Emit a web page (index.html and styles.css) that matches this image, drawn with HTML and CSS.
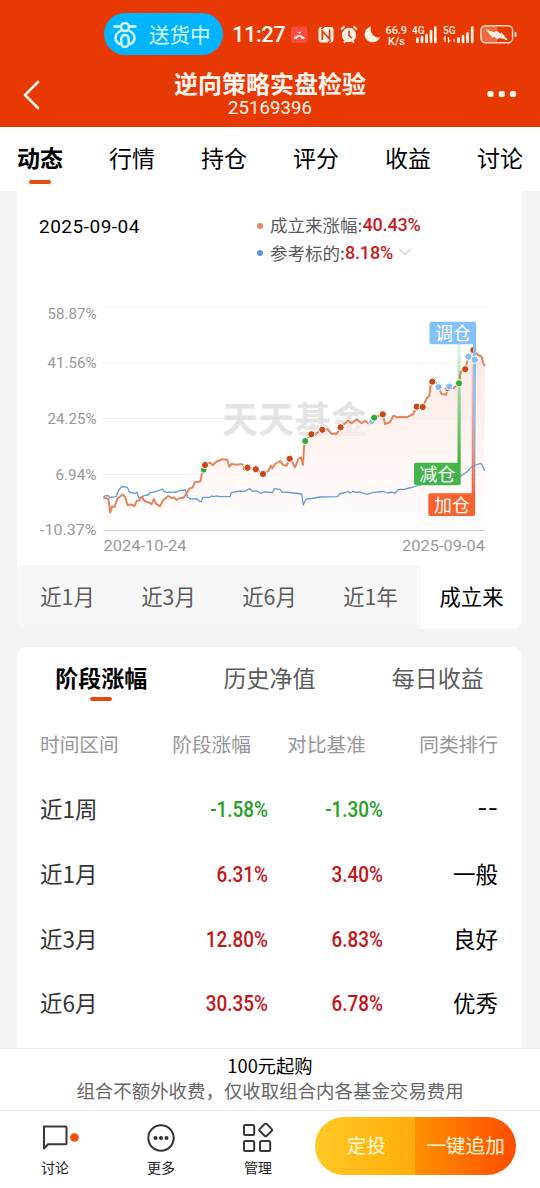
FILE: index.html
```html
<!DOCTYPE html>
<html lang="zh-CN">
<head>
<meta charset="utf-8">
<title>逆向策略实盘检验</title>
<link rel="stylesheet" href="styles.css">
</head>
<body>
<header class="header">
  <div class="status">
    <div class="pill">
      <svg class="pill-icon" width="24" height="28" viewBox="0 0 24 28" fill="none" stroke="#d9ffff" stroke-width="2.4" stroke-linecap="round">
        <path d="M1.5 5.5H8M16 5.5h6.500"/><circle cx="12" cy="6" r="4"/>
        <path d="M7.500 10C1 13 1 20 6.500 23M16.500 10C23 13 23 20 17.500 23"/>
        <rect x="8.300" y="14" width="7.400" height="12" rx="3.700"/>
      </svg>
      <span>送货中</span>
    </div>
    <span class="clock">11:27</span>
    <svg class="status-icons" width="230" height="24" viewBox="290 22 230 24" fill="#fff2e6">
      <rect x="291" y="26.500" width="16.500" height="16.500" rx="3.500" fill="#ff4a3d"/>
      <path d="M294 39v-1.500q5.300-5 10.600 0V39l-3 .3-.5-2q-1.800-.7-3.600 0l-.5 2z"/>
      <path d="M297 31.500l2 2 3-2.500" fill="none" stroke="#fff2e6"/>
      <rect x="318.500" y="27" width="15" height="15.500" rx="3"/>
      <path d="M322.300 40V31l7.300 8v-9.500" fill="none" stroke="#e93902" stroke-width="1.800"/>
      <path d="M321 29l3-2.200M331 40.500l-3 2.200" fill="none" stroke="#e93902" stroke-width="1.500"/>
      <circle cx="349" cy="35" r="7.200"/>
      <path d="M341 29.500l3.500-3M357 29.500l-3.500-3M344 42.500l2-2M354 42.500l-2-2" fill="none" stroke="#fff2e6" stroke-width="2"/>
      <path d="M349 30.500v5l3 2.500" fill="none" stroke="#e93902" stroke-width="1.600"/>
      <path d="M371 26.500A8 8 0 1 0 380 37.500A8.500 8.500 0 0 1 371 26.500z"/>
      <g class="tiny">
        <text x="385.500" y="33.500" font-size="11" textLength="21.500">66.9</text>
        <text x="388" y="44.500" font-size="11" textLength="17">K/s</text>
        <text x="412" y="33.500" font-size="10" textLength="12.500" lengthAdjust="spacingAndGlyphs">4G</text>
        <text x="443" y="33.500" font-size="10" textLength="12.500" lengthAdjust="spacingAndGlyphs">5G</text>
      </g>
      <path d="M417.500 42v-3.500M422 42v-5M426.500 42v-7M431 42v-11M435.300 42V27.500M458.500 42v-3.500M463 42v-6M467.500 42v-8.500M472.200 42V27.500" fill="none" stroke="#fff2e6" stroke-width="2.700" stroke-linecap="round"/>
      <path d="M445 42v-5l-1.500 2M448.500 37v5l1.500-2M454 42v-3" fill="none" stroke="#fff2e6" stroke-width="1.200"/>
      <rect x="481" y="25.800" width="31.500" height="17" rx="4.500" fill="#ef6a3e" stroke="#ffd9c4" stroke-width="1.600"/>
      <path d="M497 26.700h11a3.700 3.700 0 0 1 3.700 3.700v7.800a3.700 3.700 0 0 1-3.700 3.700h-11z" fill="#e93902"/>
      <path d="M485.500 29.300l9.500 3.200 1-2.200 4.500 3.500.8-1.800 6.700 8.200-9-2.500-1 1.800-4.500-3-1 1.300z"/>
      <rect x="514.500" y="32" width="2" height="5" rx="1"/>
    </svg>
  </div>
  <div class="titlebar">
    <svg class="back" width="18" height="30" viewBox="0 0 18 30"><path d="M15 2L2 15l13 13" fill="none" stroke="#fff5ef" stroke-width="2.600" stroke-linecap="round" stroke-linejoin="round"/></svg>
    <div class="title"><h1>逆向策略实盘检验</h1><span>25169396</span></div>
    <svg class="dots" width="30" height="8" viewBox="0 0 30 8" fill="#fff5ef"><circle cx="3.500" cy="4" r="3.200"/><circle cx="14.800" cy="4" r="3.200"/><circle cx="26" cy="4" r="3.200"/></svg>
  </div>
</header>
<nav class="tabs">
  <a class="active">动态</a><a>行情</a><a>持仓</a><a>评分</a><a>收益</a><a>讨论</a>
</nav>
<main class="content">
  <section class="card chart-card">
    <div class="summary">
      <time>2025-09-04</time>
      <div class="legend">
        <div class="legend-row"><i class="dot orange"></i><span>成立来涨幅:</span><b>40.43%</b></div>
        <div class="legend-row"><i class="dot blue"></i><span>参考标的:</span><b>8.18%</b>
          <svg width="14" height="8" viewBox="0 0 14 8"><path d="M1 1l6 5.500L13 1" fill="none" stroke="#d3d7dc" stroke-width="1.500"/></svg></div>
      </div>
    </div>
    <svg class="chart" width="505" height="265" viewBox="17 300 505 265">
      <defs>
        <linearGradient id="area" x1="0" y1="350" x2="0" y2="530" gradientUnits="userSpaceOnUse"><stop offset="0" stop-color="#f9e0d8" stop-opacity=".75"/><stop offset="1" stop-color="#fffafa" stop-opacity=".5"/></linearGradient>
        <linearGradient id="green" x1="0" y1="344" x2="0" y2="463" gradientUnits="userSpaceOnUse"><stop offset="0" stop-color="#43b949" stop-opacity=".15"/><stop offset="1" stop-color="#3db544"/></linearGradient>
        <linearGradient id="red" x1="0" y1="350" x2="0" y2="496" gradientUnits="userSpaceOnUse"><stop offset="0" stop-color="#f7582a" stop-opacity=".1"/><stop offset="1" stop-color="#f7582a"/></linearGradient>
        <linearGradient id="blue" x1="0" y1="344" x2="0" y2="496" gradientUnits="userSpaceOnUse"><stop offset="0" stop-color="#7dbefa"/><stop offset="1" stop-color="#7dbefa" stop-opacity=".2"/></linearGradient>
      </defs>
      <path d="M103.500 307.500H484.500M103.500 363.500H484.500M103.500 418.500H484.500M103.500 474.500H484.500" stroke="#f3f3f3"/>
      <path d="M103.500 530.500H484.500" stroke="#c9c9c9"/>
      <text class="watermark" x="222" y="433" textLength="145">天天基金</text>
      <path fill="url(#area)" d="M103.500 530V497.500L108 499L110.300 512.500L117.500 498.500L122.700 494.500L127.500 505L134.500 506L142 496.500L144.300 501L151.700 504L160 506.300L168.300 496L176.700 500L183.300 498L189.300 488.700L194.700 482.300L200.300 481.300L204.300 465.300L221.700 459.300L227.300 459.700L229.300 466.700L247.300 467.700L263 474L270.700 465.700L280 461L289.700 458.700L295 467.300L301 457.300L303 465L305.300 441L311.300 434.300L322.300 429.700L327.300 429.300L331.700 433.700L336.700 433.700L345 423.300L356.700 419.300L371.700 421.700L382.700 414.300L385 424L393.300 415.700L406.700 417.300L416.700 406.700L422.700 407L429.300 396L432.300 381.700L441.700 394L446 394.700L459 383.300L460.700 371.700L468.700 356.700L473.300 350L481.700 356.700L484.700 366V530z"/>
      <polyline fill="none" stroke="#649bd8" stroke-width="1.300" stroke-linejoin="round" points="103.500,497.300 104.500,496 108.300,495.700 109.500,497.500 116,496.700 118.700,490 121,487.500 122,486.500 127.300,487.300 129.300,492 135,493.500 137,492.300 138.700,498 145,495.300 148,495 150,492.700 156.700,491.300 162.700,489 163.500,491 166.700,492.300 176.700,492 180,490.300 185.300,490 187.700,497.300 190.700,499 196.700,498.700 200,501.700 201.500,501.500 202.700,497.300 209,497.300 211.700,496 214,496.700 216,496 220,496.700 230,496.700 231.300,492.700 240,491 244,491.500 250,488.700 252.300,491.300 256.700,490.700 260.700,493.300 264,492 272.700,492.300 274.300,488.700 280,489.300 281.700,492 290,492.500 301.700,494 303.300,505 306,499 312,498.500 320,497 337.700,496.700 339.300,494 345,492.500 348,491.300 350,493 353,491.500 356.700,492.300 360,492 366.700,494.300 373.300,492.300 383.300,491.500 388,493 392,492 395,493.300 397,491 398.700,489.300 404,489.300 413.300,487 423.300,484 440,480 450,478 460,476.700 468.300,470.700 470,468 473.300,466 477,464.500 481,463.300 483,467 484.700,470.700"/>
      <polyline fill="none" stroke="#e5845f" stroke-width="2" stroke-linejoin="round" points="103.500,497.500 108.300,499 110.300,512.500 112,506.500 114.500,507 117.500,498.500 120,496.500 122.700,494.500 125,497 127.500,505 131,504.500 134.500,506 136.700,500.700 139,500.500 142,496.500 144.300,501 149.300,502.700 151.700,504 153.700,499 156,503.700 160,506.300 163.300,500 168.300,496 171.700,498 174,497.500 176.700,500 180,498 183.300,498 186.700,493.300 189.300,488.700 192.700,487.300 194.700,482.300 198.300,481.700 200.300,481.300 202,473.300 204.300,465.300 210,462.700 212.700,465.300 216.700,461.500 221.700,459.300 227.300,459.700 229.300,466.700 231.700,464 236.700,464.700 241.700,464 247.300,467.700 255.700,469 263,474 268.300,471 270.700,465.700 272.300,468.300 275,464 280,461 283.300,465 286.700,465.700 289.700,458.700 292.700,462.700 295,467.300 298.300,459 301,457.300 303,465 304,446.700 305.300,441 311.300,434.300 315,435 318.300,432 322.300,429.700 327.300,429.300 331.700,433.700 336.700,433.700 340.700,427.300 345,423.300 348.300,420.700 351.700,423.300 356.700,419.300 361.700,423.300 365,420.700 368.300,423.300 371.700,421.700 374,417.700 382.700,414.300 385,424 390,422.300 393.300,415.700 397.300,417.300 401.700,416.700 406.700,417.300 413.300,414 416.700,406.700 422.700,407 426.700,398.300 429.300,396 430.700,385 432.300,381.700 433.300,378.300 438.300,387.300 441.700,394 446,394.700 449.300,387 454,388 459,383.300 460.700,371.700 465,369.300 468.700,356.700 473.300,350 478.300,355 481.700,356.700 483.300,363.300 484.700,366"/>
      <rect x="457.500" y="344" width="3.200" height="120" fill="url(#green)"/>
      <g stroke="#fff" stroke-width="1">
        <g fill="#35a83a"><circle cx="203.700" cy="469.800" r="3.400"/><circle cx="305.300" cy="441" r="3.600"/></g>
        <circle cx="371.700" cy="421.500" r="3.200" fill="#84bff0"/>
        <circle cx="374.200" cy="417.700" r="3.600" fill="#35a83a"/>
        <g fill="#cb4717"><circle cx="205" cy="465" r="3.600"/><circle cx="245.500" cy="468" r="3.300"/><circle cx="247.500" cy="467.700" r="3.600"/><circle cx="255.800" cy="469.200" r="3.600"/><circle cx="263" cy="474" r="3.600"/><circle cx="289.700" cy="458.700" r="3.600"/><circle cx="311.400" cy="434.300" r="3.600"/><circle cx="322.300" cy="429.800" r="3.600"/><circle cx="340.600" cy="427.300" r="3.600"/><circle cx="382.700" cy="414.300" r="3.600"/><circle cx="416.700" cy="406.700" r="3.600"/><circle cx="422.700" cy="407" r="3.600"/><circle cx="432.300" cy="381.700" r="3.600"/><circle cx="448" cy="388.500" r="3.400"/><circle cx="465.200" cy="369.200" r="3.600"/><circle cx="473.300" cy="350" r="3.600"/></g>
        <g fill="#84bff0"><circle cx="438.400" cy="387.200" r="3.600"/><circle cx="449.300" cy="386.600" r="3.600"/><circle cx="468.500" cy="356.700" r="3.600"/></g>
        <circle cx="459" cy="383.300" r="3.600" fill="#35a83a"/>
      </g>
      <rect x="471.700" y="350" width="3.400" height="146" fill="url(#red)"/>
      <rect x="473" y="343" width="3" height="153" fill="url(#blue)"/>
      <circle cx="474.700" cy="359.800" r="3.700" fill="#84bff0" stroke="#fff"/>
      <rect x="429.500" y="321.700" width="46.500" height="22.500" rx="2" fill="#82c0fb"/>
      <rect x="414" y="462.700" width="46.700" height="22.500" rx="2" fill="#43b549"/>
      <path d="M423 484l15-3.500 22-4" stroke="#38a078" fill="none"/>
      <rect x="428.300" y="493.300" width="46.700" height="22.700" rx="2" fill="#f96030"/>
      <g class="flag"><text x="435" y="339.500" textLength="36">调仓</text><text x="419.500" y="480.500" textLength="36">减仓</text><text x="434" y="511.500" textLength="36">加仓</text></g>
      <g class="axis">
        <text x="47.500" y="318.800" textLength="49" lengthAdjust="spacingAndGlyphs">58.87%</text><text x="47.500" y="368" textLength="49" lengthAdjust="spacingAndGlyphs">41.56%</text><text x="47.500" y="423.800" textLength="49" lengthAdjust="spacingAndGlyphs">24.25%</text><text x="55.500" y="479.500" textLength="41" lengthAdjust="spacingAndGlyphs">6.94%</text><text x="40" y="535.300" textLength="56.500" lengthAdjust="spacingAndGlyphs">-10.37%</text>
        <text x="103.500" y="550.500" textLength="83" lengthAdjust="spacingAndGlyphs">2024-10-24</text><text x="402" y="550.500" textLength="83" lengthAdjust="spacingAndGlyphs">2025-09-04</text>
      </g>
    </svg>
    <div class="ranges"><a>近1月</a><a>近3月</a><a>近6月</a><a>近1年</a><a class="active">成立来</a></div>
  </section>
  <section class="card table-card">
    <div class="subtabs"><a class="active">阶段涨幅</a><a>历史净值</a><a>每日收益</a></div>
    <div class="row head"><span>时间区间</span><span>阶段涨幅</span><span>对比基准</span><span>同类排行</span></div>
    <div class="row"><span>近1周</span><b class="down">-1.58%</b><b class="down">-1.30%</b><em class="none">--</em></div>
    <div class="row"><span>近1月</span><b>6.31%</b><b>3.40%</b><em>一般</em></div>
    <div class="row"><span>近3月</span><b>12.80%</b><b>6.83%</b><em>良好</em></div>
    <div class="row"><span>近6月</span><b>30.35%</b><b>6.78%</b><em>优秀</em></div>
  </section>
</main>
<footer class="footer">
  <div class="notice"><strong>100元起购</strong><span>组合不额外收费，仅收取组合内各基金交易费用</span></div>
  <div class="actions">
    <a class="act chat"><svg width="40" height="30" viewBox="0 0 40 30"><path d="M3 3.500h21.500a1 1 0 0 1 1 1v15.700a1 1 0 0 1-1 1H7L3 25.500z" fill="none" stroke="#383838" stroke-width="2" stroke-linejoin="round"/><circle cx="33.500" cy="14.500" r="4.300" fill="#f84e0c"/></svg><span>讨论</span></a>
    <a class="act"><svg width="30" height="30" viewBox="0 0 30 30"><circle cx="15" cy="15" r="12.700" fill="none" stroke="#333" stroke-width="2"/><g fill="#333"><circle cx="9.500" cy="15" r="2"/><circle cx="15" cy="15" r="2"/><circle cx="20.500" cy="15" r="2"/></g></svg><span>更多</span></a>
    <a class="act manage"><svg width="32" height="30" viewBox="0 0 32 30" fill="none" stroke="#383838" stroke-width="2"><rect x="2" y="2" width="10.200" height="10" rx="1.500"/><rect x="2" y="18" width="10.200" height="10" rx="1.500"/><rect x="18" y="18" width="10.200" height="10" rx="1.500"/><rect x="18.800" y="2" width="9.800" height="9.800" rx="1.500" transform="rotate(45 23.700 6.900)"/></svg><span>管理</span></a>
    <div class="buttons"><a class="invest">定投</a><a class="add">一键追加</a></div>
  </div>
</footer>
</body>
</html>
```
FILE: styles.css
```css
* { box-sizing: border-box; }
body { margin: 0; width: 540px; height: 1188px; overflow: hidden; display: flex; flex-direction: column; background: #f4f4f4; color: #000; font-family: "Noto Sans CJK SC", sans-serif; }
svg { display: block; flex: none; }
.header { height: 127px; flex: none; background: #e93902; color: #fff5ef; }
.status { height: 57px; padding: 13px 0 2px 104px; display: flex; align-items: center; }
.pill { width: 119px; height: 42px; border-radius: 21px; background: #00b4ff; color: #d9ffff; display: flex; align-items: center; padding-left: 9px; gap: 12px; font-size: 20.500px; line-height: 30px; }
.pill-icon { margin-top: 1px; }
.clock { width: 57px; margin-left: 9px; padding-top: 2px; font: 500 22px/30px Roboto, sans-serif; letter-spacing: -.5px; }
.status-icons { margin-left: 1px; }
.tiny { font-family: Roboto, sans-serif; font-weight: 500; }
.titlebar { height: 70px; display: grid; grid-template-columns: 100px 1fr 100px; }
.back { margin: 23px 0 0 23px; }
.title { text-align: center; padding-top: 10px; }
.title h1 { margin: 0; font-size: 24px; line-height: 31px; font-weight: 700; }
.title span { display: block; font: 18.500px/21px Roboto, sans-serif; letter-spacing: .1px; }
.dots { margin: 33px 0 0 47px; }
.tabs { height: 64px; flex: none; background: #fff; padding: 13px 17px 0; display: flex; justify-content: space-between; font-size: 23px; line-height: 34px; }
.tabs .active, .subtabs .active { font-weight: 700; }
.tabs .active::after, .subtabs .active::after { content: ""; display: block; width: 22px; height: 4px; border-radius: 2px; background: #e84a12; margin: 6px auto 0; }
.content { height: 857px; flex: none; padding: 0 18px 0 17px; overflow: hidden; }
.card { background: #fff; overflow: hidden; }
.chart-card { height: 438px; border-radius: 0 0 9px 9px; }
.summary { height: 109px; padding: 20px 0 0 22px; display: flex; }
.summary time { width: 218px; font: 19px/31px Roboto, sans-serif; letter-spacing: .5px; }
.legend { font-size: 17.500px; color: #5b5b5b; }
.legend-row { height: 27.500px; line-height: 27.500px; display: flex; align-items: center; }
.legend-row b { color: #c91922; font: 500 18px/27px Roboto, sans-serif; letter-spacing: -.15px; }
.legend-row svg { margin-left: 5px; }
.dot { width: 6px; height: 6px; border-radius: 50%; margin: 2px 7px 0 0; }
.orange { background: #e8845f; }
.blue { background: #5294e0; }
.axis text { font: 15.500px Roboto, sans-serif; fill: #999; }
.watermark { font-size: 36px; font-weight: 700; fill: #d8d8d8; fill-opacity: .7; }
.flag text { font-size: 18px; fill: #fff; }
.ranges { height: 64px; display: grid; grid-template-columns: repeat(5, 1fr); background: #f7f7f7; text-align: center; font-size: 21.300px; line-height: 62px; color: #5c5c5c; }
.ranges .active { background: #fff; color: #000; }
.table-card { height: 420px; margin-top: 18px; border-radius: 9px 9px 0 0; }
.subtabs { height: 65px; padding-top: 13px; display: grid; grid-template-columns: repeat(3, 1fr); text-align: center; font-size: 23px; line-height: 34px; color: #5c5c5c; }
.subtabs .active { color: #000; }
.subtabs .active::after { margin-top: 3px; }
.row { height: 64.700px; padding: 0 24px 0 23px; display: grid; grid-template-columns: 128px 100px 115px 115px; align-items: center; font-size: 22.500px; color: #333; line-height: 34px; text-align: right; }
.row > :first-child { text-align: left; }
.row b { font: 500 22.500px/34px Roboto, sans-serif; color: #c41519; transform: scaleX(.84) translateY(1px); transform-origin: right; }
.row .down { color: #269e27; }
.row em { font-style: normal; color: #000; }
.row .none { font-family: Inter, sans-serif; }
.head { height: 64px; font-size: 19.700px; color: #969696; }
.head :nth-child(2), .head :nth-child(3) { padding-right: 17px; }
.footer { height: 140px; flex: none; background: #fff; border-top: 1px solid #e9e9e9; }
.notice { height: 62px; border-bottom: 1px solid #eee; padding-top: 3px; text-align: center; display: flex; flex-direction: column; }
.notice strong { font-size: 18.300px; line-height: 26px; font-weight: 400; }
.notice span { font-size: 18.450px; line-height: 25px; color: #666; }
.actions { height: 77px; display: flex; padding-left: 41px; }
.act { width: 40px; margin-right: 60px; padding-top: 12px; display: flex; flex-direction: column; align-items: center; font-size: 14px; line-height: 22px; color: #222; gap: 3px; }
.chat { align-items: flex-start; }
.manage { margin-right: 37px; margin-left: -3px; }
.buttons { width: 201px; height: 58px; margin-top: 6px; display: flex; border-radius: 29px; overflow: hidden; font-size: 19.700px; line-height: 55px; text-align: center; color: #fff8d5; }
.invest { width: 100px; padding-left: 3px; background: linear-gradient(90deg, #ffc926, #ffac08); }
.add { width: 101px; background: linear-gradient(90deg, #ff9100, #ff4b00); }
```
